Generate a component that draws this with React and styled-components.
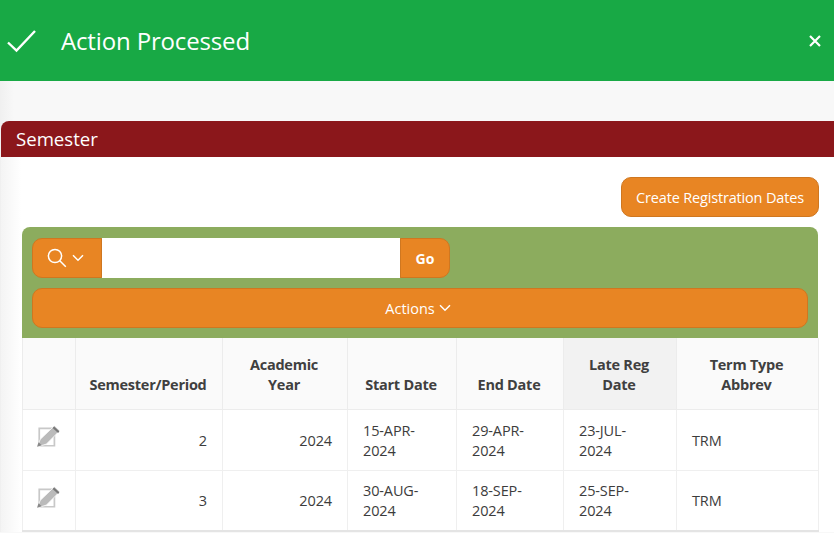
import React from 'react';
import styled, { createGlobalStyle } from 'styled-components';

const GlobalStyle = createGlobalStyle`
  html, body {
    margin: 0;
    height: 100%;
    overflow: hidden;
    background: #f8f8f8;
    font-family: "Open Sans", "Noto Sans", "Liberation Sans", sans-serif;
    color: #3c3c3c;
  }
`;

const Banner = styled.div`
  height: 81px;
  background: #18a945;
  display: flex;
  align-items: center;
  color: #fff;
  padding: 0 13px 0 7px;
  box-sizing: border-box;
`;

const BannerTitle = styled.div`
  flex: 1;
  margin-left: 24px;
  font-size: 24px;
  letter-spacing: -0.15px;
`;

const Page = styled.div`
  padding: 40px 0 0 1px;
  background: linear-gradient(90deg, #f0f0f0, #f8f8f8 14px);
`;

const Region = styled.section`
  background: linear-gradient(90deg, #f4f4f4, #fff 20px);
  border-radius: 6px 0 0 0;
`;

const RegionHeader = styled.h2`
  margin: 0;
  height: 36px;
  background: #8b171b;
  border-radius: 8px 0 0 0;
  color: #fff;
  font-size: 18.6px;
  font-weight: 400;
  line-height: 36px;
  padding-left: 15px;
`;

const RegionBody = styled.div`
  padding: 20px 15px 0 21px;
`;

const ButtonRow = styled.div`
  display: flex;
  justify-content: flex-end;
  margin-bottom: 10px;
`;

const OrangeButton = styled.button`
  box-sizing: border-box;
  background: #e88523;
  border: 1px solid #cf7720;
  border-radius: 10px;
  color: #fff;
  font-family: inherit;
  font-size: 14.5px;
  letter-spacing: -0.17px;
  height: 40px;
  padding: 0;
  display: flex;
  align-items: center;
  justify-content: center;
  gap: 4px;
`;

const CreateButton = styled(OrangeButton)`
  width: 198px;
`;

const ActionsButton = styled(OrangeButton)`
  padding-right: 4px;
  letter-spacing: 0;
`;

const Toolbar = styled.div`
  background: #8cac5e;
  border-radius: 8px 8px 0 0;
  margin-right: 1px;
  padding: 11px 10px 10px;
  display: flex;
  flex-direction: column;
  gap: 10px;
`;

const SearchRow = styled.div`
  display: flex;
  height: 40px;
`;

const SearchMenu = styled(OrangeButton)`
  width: 70px;
  border-radius: 10px 0 0 10px;
  gap: 5px;
  padding-right: 3px;
`;

const SearchInput = styled.input`
  box-sizing: border-box;
  width: 298px;
  border: 0;
  background: #fff;
  padding: 0 8px;
`;

const GoButton = styled(OrangeButton)`
  width: 50px;
  border-radius: 0 10px 10px 0;
  font-size: 14px;
  font-weight: 700;
  letter-spacing: 0;
`;

const Table = styled.table`
  width: 796px;
  table-layout: fixed;
  border-collapse: collapse;
  font-size: 14.5px;
  border-left: 1px solid #e8e8e8;
  border-right: 1px solid #e8e8e8;
  letter-spacing: -0.13px;
`;

const Th = styled.th`
  height: 71px;
  box-sizing: border-box;
  background: ${({ $sorted }) => ($sorted ? '#f2f2f2' : '#fafafa')};
  border: 1px solid #ececec;
  border-top: 0;
  padding: 8px 14px 14px 12px;
  vertical-align: bottom;
  line-height: 20px;
  font-weight: 700;
  letter-spacing: -0.25px;
  color: #404040;
`;

const Td = styled.td`
  height: 61px;
  box-sizing: border-box;
  border: 1px solid #efefef;
  padding: ${({ $num }) => ($num ? '2px 15px 0 15px' : '2px 24px 0 15px')};
  line-height: 20px;
  text-align: ${({ $num }) => ($num ? 'right' : 'left')};
`;

const EditCell = styled(Td)`
  padding: 0;
  text-align: center;
`;

const LastRow = styled.tr`
  border-bottom: 2px solid #e4e4e4;
`;

const EditGlyph = styled.svg`
  display: block;
  margin: -7px 0 0 13px;
`;

const CheckIcon = () => (
  <svg width="30" height="24" viewBox="0 0 30 24" fill="none" stroke="#fff" strokeWidth="2.4">
    <path d="M1 13.5l8.5 8L28 2" />
  </svg>
);

const CloseIcon = () => (
  <svg width="12" height="12" viewBox="0 0 12 12" fill="none" stroke="#fff" strokeWidth="2.2">
    <path d="M1 1l10 10M11 1L1 11" />
  </svg>
);

const SearchIcon = () => (
  <svg width="20" height="20" viewBox="0 0 20 20" fill="none" stroke="#fff" strokeWidth="1.5">
    <circle cx="8" cy="8" r="6.6" />
    <path d="M12.8 12.8l6 6" />
  </svg>
);

const ChevronIcon = () => (
  <svg width="12" height="8" viewBox="0 0 12 8" fill="none" stroke="#fff" strokeWidth="1.5">
    <path d="M1 1.2l5 5 5-5" />
  </svg>
);

const EditIcon = () => (
  <EditGlyph width="26" height="26" viewBox="0 0 24 24" fill="none">
    <path d="M3 5h14v16H3z" stroke="#c8c8c8" strokeWidth="1.6" />
    <path d="M1 22l3-7L17 2.5l5 4.5L9.5 19.5z" fill="#bababa" stroke="#fff" strokeWidth="0.7" />
    <path d="M16 4l5 4.5" stroke="#777" strokeWidth="1.8" />
    <path d="M1 22l1.3-4.2 3 2.8z" fill="#888" />
  </EditGlyph>
);

const rows = [
  { period: 2, year: 2024, start: '15-APR-2024', end: '29-APR-2024', late: '23-JUL-2024', term: 'TRM' },
  { period: 3, year: 2024, start: '30-AUG-2024', end: '18-SEP-2024', late: '25-SEP-2024', term: 'TRM' },
];

const widths = [53, 147, 125, 109, 107, 113, 142];

export default function App() {
  return (
    <>
      <GlobalStyle />
      <Banner>
        <CheckIcon />
        <BannerTitle>Action Processed</BannerTitle>
        <CloseIcon />
      </Banner>
      <Page>
        <Region>
          <RegionHeader>Semester</RegionHeader>
          <RegionBody>
            <ButtonRow>
              <CreateButton>Create Registration Dates</CreateButton>
            </ButtonRow>
            <Toolbar>
              <SearchRow>
                <SearchMenu aria-label="Search">
                  <SearchIcon />
                  <ChevronIcon />
                </SearchMenu>
                <SearchInput />
                <GoButton>Go</GoButton>
              </SearchRow>
              <ActionsButton>
                Actions <ChevronIcon />
              </ActionsButton>
            </Toolbar>
            <Table>
              <colgroup>
                {widths.map((w, i) => (
                  <col key={i} style={{ width: w }} />
                ))}
              </colgroup>
              <thead>
                <tr>
                  <Th />
                  <Th>Semester/Period</Th>
                  <Th>Academic Year</Th>
                  <Th>Start Date</Th>
                  <Th>End Date</Th>
                  <Th $sorted>Late Reg Date</Th>
                  <Th>Term Type Abbrev</Th>
                </tr>
              </thead>
              <tbody>
                {rows.map((row, i) => {
                  const Row = i === rows.length - 1 ? LastRow : 'tr';
                  return (
                    <Row key={row.period}>
                      <EditCell><EditIcon /></EditCell>
                      <Td $num>{row.period}</Td>
                      <Td $num>{row.year}</Td>
                      <Td>{row.start}</Td>
                      <Td>{row.end}</Td>
                      <Td>{row.late}</Td>
                      <Td>{row.term}</Td>
                    </Row>
                  );
                })}
              </tbody>
            </Table>
          </RegionBody>
        </Region>
      </Page>
    </>
  );
}
